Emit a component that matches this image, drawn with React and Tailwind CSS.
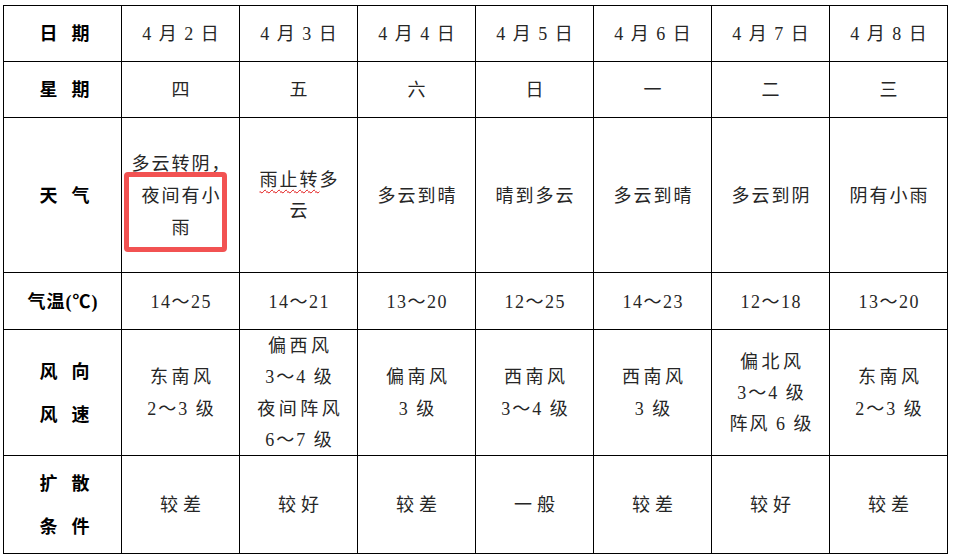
import React from "react";

const FONT = "font-['Liberation_Serif','Noto_Sans_CJK_SC',serif]";
const CELL = "bg-white flex flex-col items-center justify-center pt-[2px] text-[18px] text-[#262626] whitespace-nowrap";
const LABEL = "bg-white flex flex-col items-center justify-center pt-[2px] text-[18px] font-bold text-black whitespace-nowrap";

const T15 = "tracking-[1.5px] pl-[1.5px]";
const T2 = "tracking-[2px] pl-[2px]";
const T35 = "tracking-[3.5px] pl-[3.5px]";
const T5 = "tracking-[5px] pl-[5px]";

const dates = ["4 月 2 日", "4 月 3 日", "4 月 4 日", "4 月 5 日", "4 月 6 日", "4 月 7 日", "4 月 8 日"];
const week = ["四", "五", "六", "日", "一", "二", "三"];
const temps = ["14～25", "14～21", "13～20", "12～25", "14～23", "12～18", "13～20"];
const wind = [
  ["东南风", "2～3 级"],
  ["偏西风", "3～4 级", "夜间阵风", "6～7 级"],
  ["偏南风", "3 级"],
  ["西南风", "3～4 级"],
  ["西南风", "3 级"],
  ["偏北风", "3～4 级", "阵风 6 级"],
  ["东南风", "2～3 级"],
];
const diff = ["较差", "较好", "较差", "一般", "较差", "较好", "较差"];
const weatherSingle = ["多云到晴", "晴到多云", "多云到晴", "多云到阴", "阴有小雨"];

function Pair({ a, b }) {
  return (
    <div className="flex gap-[14px] pl-[4px]">
      <span>{a}</span>
      <span>{b}</span>
    </div>
  );
}

export default function App() {
  return (
    <div className={`w-[956px] h-[558px] bg-white overflow-hidden ${FONT}`}>
      <div className="ml-[3px] mt-[5px] w-[945px] grid grid-cols-[repeat(8,117px)] grid-rows-[55px_55px_154px_56px_125px_97px] gap-px bg-black p-px">
        {/* Row 1 */}
        <div className={LABEL}>
          <Pair a="日" b="期" />
        </div>
        {dates.map((d) => (
          <div key={d} className={CELL}>
            <div className={T15}>{d}</div>
          </div>
        ))}

        {/* Row 2 */}
        <div className={LABEL}>
          <Pair a="星" b="期" />
        </div>
        {week.map((w) => (
          <div key={w} className={CELL}>
            <div>{w}</div>
          </div>
        ))}

        {/* Row 3 */}
        <div className={LABEL}>
          <Pair a="天" b="气" />
        </div>
        <div className={`${CELL} relative leading-[32px]`}>
          <div className={T2}>多云转阴，</div>
          <div className={T2}>夜间有小</div>
          <div className={T2}>雨</div>
          <div className="absolute left-[2px] top-[54px] w-[103px] h-[80px] border-[5px] border-[#f25252] rounded-[4px]" />
        </div>
        <div className={`${CELL} leading-[31px]`}>
          <div className={T2}>
            <span className="underline decoration-wavy decoration-[#e01010] decoration-1 underline-offset-[3px]">雨止转</span>多
          </div>
          <div className={T2}>云</div>
        </div>
        {weatherSingle.map((w, i) => (
          <div key={i} className={CELL}>
            <div className={T2}>{w}</div>
          </div>
        ))}

        {/* Row 4 */}
        <div className={LABEL}>
          <div className="tracking-[1px] pl-[1px]">气温(℃)</div>
        </div>
        {temps.map((t, i) => (
          <div key={i} className={CELL}>
            <div className={T15}>{t}</div>
          </div>
        ))}

        {/* Row 5 */}
        <div className={`${LABEL} leading-[43px]`}>
          <Pair a="风" b="向" />
          <Pair a="风" b="速" />
        </div>
        {wind.map((lines, i) => (
          <div key={i} className={`${CELL} leading-[31.3px]`}>
            {lines.map((l, j) => (
              <div key={j} className={/\d/.test(l) ? T2 : T35}>
                {l}
              </div>
            ))}
          </div>
        ))}

        {/* Row 6 */}
        <div className={`${LABEL} leading-[43px]`}>
          <Pair a="扩" b="散" />
          <Pair a="条" b="件" />
        </div>
        {diff.map((d, i) => (
          <div key={i} className={CELL}>
            <div className={T5}>{d}</div>
          </div>
        ))}
      </div>
    </div>
  );
}
